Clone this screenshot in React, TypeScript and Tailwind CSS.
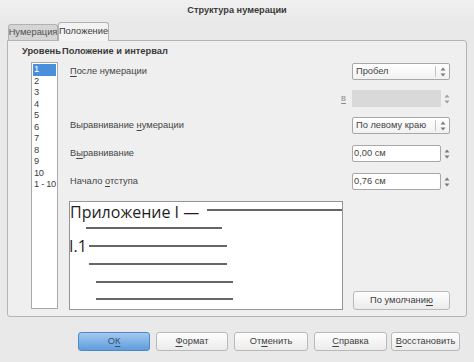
import React from 'react';

const levels = ['1', '2', '3', '4', '5', '6', '7', '8', '9', '10', '1 - 10'];

const Arrows = ({ dim = false }: { dim?: boolean }) => (
  <svg width="6" height="10" viewBox="0 0 6 10" className="shrink-0">
    <polygon points="0.5,3.5 3,0.5 5.5,3.5" fill={dim ? '#a0a0a0' : '#7a7a7a'} />
    <polygon points="0.5,6.5 3,9.5 5.5,6.5" fill={dim ? '#a0a0a0' : '#7a7a7a'} />
  </svg>
);

const Select = ({ value }: { value: string }) => (
  <div className="w-[98px] h-[17px] border border-[#a8a8a8] rounded-[2px] bg-gradient-to-b from-white to-[#f1f1f1] flex items-center pl-[3px] pr-[3px]">
    <span className="leading-none whitespace-nowrap">{value}</span>
    <span className="ml-auto h-[11px] border-l border-[#c4c4c4]" />
    <span className="ml-[4px]"><Arrows /></span>
  </div>
);

const Spin = ({ value, disabled = false }: { value?: string; disabled?: boolean }) => (
  <div className="w-[98px] h-[17px] flex items-center">
    <div
      className={
        disabled
          ? 'w-[89px] h-[17px] bg-[#d9d9d9] rounded-[1px]'
          : 'w-[89px] h-[17px] bg-white border border-[#a8a8a8] rounded-[2px] flex items-center pl-[1px]'
      }
    >
      {value && <span className="leading-none whitespace-nowrap">{value}</span>}
    </div>
    <span className="ml-[3px]"><Arrows dim={disabled} /></span>
  </div>
);

const Button = ({ children, w, primary = false }: { children: React.ReactNode; w: string; primary?: boolean }) => (
  <div
    className={
      primary
        ? `${w} h-[19px] rounded-[3px] border border-[#4f88c6] bg-gradient-to-b from-[#a3c9ef] to-[#5f9ddd] flex items-center justify-center text-[#34506e] whitespace-nowrap`
        : `${w} h-[19px] rounded-[3px] border border-[#b9b9b9] bg-gradient-to-b from-[#fefefe] to-[#ebebeb] flex items-center justify-center text-[#404040] whitespace-nowrap`
    }
  >
    {children}
  </div>
);

export default function App() {
  return (
    <div className="w-[474px] h-[362px] bg-[#e9e9e9] flex flex-col font-['Liberation_Sans',Arial,sans-serif] text-[9.3px] text-[#454545] overflow-hidden">
      {/* title */}
      <div className="h-[22px] flex items-center justify-center font-bold text-[9.2px] text-[#3a3a3a] bg-gradient-to-b from-[#f0f0f0] to-[#e9e9e9]">
        Структура нумерации
      </div>

      {/* tabs */}
      <div className="h-[18px] flex items-end pl-[8px]">
        <div className="w-[50px] h-[16px] bg-[#d5d5d5] border border-b-0 border-[#b2b2b2] rounded-t-[3px] flex items-center justify-center text-[#505050] whitespace-nowrap">
          Нумерация
        </div>
        <div className="w-[51px] h-[19px] -mb-px relative z-10 bg-[#f3f3f3] border border-b-0 border-[#b2b2b2] rounded-t-[3px] flex items-center justify-center text-[#3c3c3c] whitespace-nowrap">
          Положение
        </div>
      </div>

      {/* panel */}
      <div className="ml-[7px] w-[460px] h-[277px] border border-[#b4b4b4] rounded-[3px] rounded-tl-none bg-[#efefef] flex flex-col">
        <div className="mt-[5px] h-[12px] flex items-center font-bold text-[#3a3a3a] whitespace-nowrap">
          <span className="ml-[14px] w-[40px]">Уровень</span>
          <span>Положение и интервал</span>
        </div>

        <div className="mt-[4px] flex">
          {/* level list */}
          <div className="ml-[23px] w-[27px] h-[247px] border border-[#a9a9a9] bg-white pt-[1px] px-[1px] flex flex-col overflow-hidden">
            {levels.map((l, i) => (
              <div
                key={l}
                className={
                  i === 0
                    ? 'h-[11.55px] leading-[11.55px] bg-[#4a8fdb] text-white pl-[1px] whitespace-nowrap'
                    : 'h-[11.55px] leading-[11.55px] text-[#3c3c3c] pl-[1px] whitespace-nowrap tracking-[-0.3px]'
                }
              >
                {l}
              </div>
            ))}
          </div>

          {/* settings */}
          <div className="ml-[4px] flex-1 flex flex-col pr-[16px] whitespace-nowrap">
            <div className="mt-[1px] h-[17px] flex items-center">
              <span className="pl-[8px]"><u className="underline-offset-2">П</u>осле нумерации</span>
              <span className="ml-auto"><Select value="Пробел" /></span>
            </div>
            <div className="mt-[10px] h-[17px] flex items-center justify-end">
              <u className="text-[#8a8a8a] underline-offset-2 mr-[6px]">в</u>
              <Spin disabled />
            </div>
            <div className="mt-[10px] h-[17px] flex items-center">
              <span className="pl-[8px]">Выравнивание <u className="underline-offset-2">н</u>умерации</span>
              <span className="ml-auto"><Select value="По левому краю" /></span>
            </div>
            <div className="mt-[11px] h-[17px] flex items-center">
              <span className="pl-[8px]">В<u className="underline-offset-2">ы</u>равнивание</span>
              <span className="ml-auto"><Spin value="0,00 см" /></span>
            </div>
            <div className="mt-[11px] h-[17px] flex items-center">
              <span className="pl-[8px]">Начало <u className="underline-offset-2">о</u>тступа</span>
              <span className="ml-auto"><Spin value="0,76 см" /></span>
            </div>

            <div className="mt-[11px] flex items-end">
              {/* preview */}
              <div className="ml-[7px] w-[274px] h-[109px] border border-[#949494] bg-white overflow-hidden">
                <svg width="272" height="107" viewBox="0 0 272 107">
                  <text x="0" y="16" fontFamily="Open Sans, sans-serif" fontSize="16" fill="#1e1e1e">
                    Приложение I —
                  </text>
                  <g stroke="#333" strokeWidth="1.5">
                    <line x1="137" y1="8" x2="272" y2="8" />
                    <line x1="16" y1="26" x2="152" y2="26" />
                    <line x1="19" y1="44" x2="157" y2="44" />
                    <line x1="19" y1="62" x2="157" y2="62" />
                    <line x1="26" y1="80" x2="163" y2="80" />
                    <line x1="26" y1="97" x2="163" y2="97" />
                  </g>
                  <text x="-1" y="50" fontFamily="Open Sans, sans-serif" fontSize="16" fill="#1e1e1e">
                    I.1
                  </text>
                </svg>
              </div>
              <div className="ml-auto">
                <Button w="w-[97px]">
                  <span>По умолчани<u className="underline-offset-2">ю</u></span>
                </Button>
              </div>
            </div>
          </div>
        </div>
      </div>

      {/* buttons */}
      <div className="mt-[15px] pl-[78px] flex">
        <Button w="w-[72px]" primary>
          <span>О<u className="underline-offset-2">К</u></span>
        </Button>
        <div className="ml-[6px]">
          <Button w="w-[72px]">
            <span><u className="underline-offset-2">Ф</u>ормат</span>
          </Button>
        </div>
        <div className="ml-[6px]">
          <Button w="w-[74px]">
            <span>От<u className="underline-offset-2">м</u>енить</span>
          </Button>
        </div>
        <div className="ml-[6px]">
          <Button w="w-[73px]">
            <span><u className="underline-offset-2">С</u>правка</span>
          </Button>
        </div>
        <div className="ml-[4px]">
          <Button w="w-[69px]">
            <span><u className="underline-offset-2">В</u>осстановить</span>
          </Button>
        </div>
      </div>
    </div>
  );
}
